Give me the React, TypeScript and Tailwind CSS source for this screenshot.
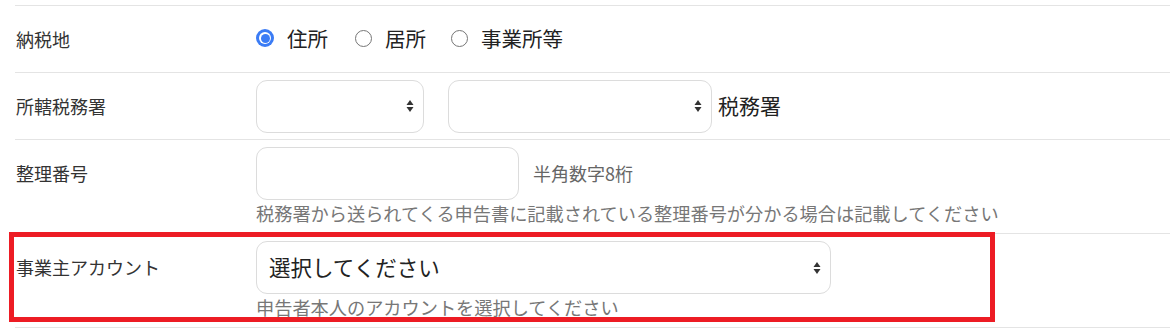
import React from 'react';

const font = { fontFamily: '"Noto Sans CJK JP", "Noto Sans", sans-serif' };

const SelectArrows = () => (
  <svg width="8" height="14" viewBox="0 0 8 14" className="shrink-0">
    <path d="M4 1 L7.5 6 L0.5 6 Z" fill="#333" />
    <path d="M4 13 L7.5 8 L0.5 8 Z" fill="#333" />
  </svg>
);

const Radio = ({ checked, label, gap }: { checked?: boolean; label: string; gap: string }) => (
  <label className={`flex items-center ${gap}`}>
    {checked ? (
      <span className="w-[18px] h-[18px] rounded-full bg-[#3b7cf5] flex items-center justify-center">
        <span className="w-[12px] h-[12px] rounded-full bg-white flex items-center justify-center">
          <span className="w-[9px] h-[9px] rounded-full bg-[#3b7cf5]" />
        </span>
      </span>
    ) : (
      <span className="w-[17px] h-[17px] rounded-full border-[1.5px] border-[#767676] bg-white" />
    )}
    <span className="ml-[13px] text-[20.5px] text-[#222] leading-none">{label}</span>
  </label>
);

const FakeSelect = ({ className, text }: { className: string; text?: string }) => (
  <div
    className={`h-[53px] rounded-[11px] border border-[#dcdcdc] bg-white flex items-center justify-between pl-[12px] pr-[9px] ${className}`}
  >
    <span className="text-[21.5px] text-[#222]">{text}</span>
    <SelectArrows />
  </div>
);

export default function App() {
  return (
    <div className="w-[1170px] h-[333px] bg-white overflow-hidden pt-[5px]" style={font}>
      <div className="ml-[15px]">
        {/* 納税地 */}
        <div className="flex items-center h-[67px] border-t border-[#e4e4e4]">
          <div className="w-[241px] pl-px text-[18px] text-[#333]">納税地</div>
          <div className="flex items-center -mt-[2px]">
            <Radio checked label="住所" gap="mr-[27px]" />
            <Radio label="居所" gap="mr-[25px]" />
            <Radio label="事業所等" gap="" />
          </div>
        </div>

        {/* 所轄税務署 */}
        <div className="flex items-center h-[67px] border-t border-[#e4e4e4]">
          <div className="w-[241px] pl-px text-[18px] text-[#333]">所轄税務署</div>
          <FakeSelect className="w-[168px]" />
          <FakeSelect className="w-[264px] ml-[24px]" />
          <span className="ml-[6px] text-[21px] text-[#222]">税務署</span>
        </div>

        {/* 整理番号 */}
        <div className="flex h-[94px] border-t border-[#e4e4e4] pt-[7px]">
          <div className="w-[241px] pl-px text-[18px] text-[#333] h-[53px] flex items-center">整理番号</div>
          <div className="flex flex-col">
            <div className="flex items-center">
              <div className="w-[263px] h-[53px] rounded-[11px] border border-[#dcdcdc] bg-white" />
              <span className="ml-[14px] text-[18px] text-[#666]">半角数字8桁</span>
            </div>
            <div className="text-[18.2px] text-[#777] leading-[24px] mt-px whitespace-nowrap">
              税務署から送られてくる申告書に記載されている整理番号が分かる場合は記載してください
            </div>
          </div>
        </div>

        {/* 事業主アカウント */}
        <div className="relative flex h-[94px] border-t border-[#e4e4e4] pt-[7px]">
          <div className="w-[241px] pl-px text-[18px] text-[#333] h-[53px] flex items-center">事業主アカウント</div>
          <div className="flex flex-col">
            <FakeSelect className="w-[575px]" text="選択してください" />
            <div className="text-[18.2px] text-[#777] leading-[24px] mt-px whitespace-nowrap">
              申告者本人のアカウントを選択してください
            </div>
          </div>
          <div className="absolute -left-[6px] -top-[2px] w-[986px] h-[90px] border-[5px] border-[#ed1c24] pointer-events-none" />
        </div>

        <div className="border-t border-[#e4e4e4]" />
      </div>
    </div>
  );
}
